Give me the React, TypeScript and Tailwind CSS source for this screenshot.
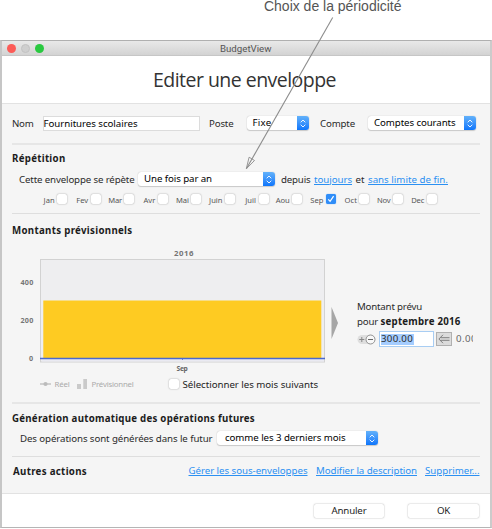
import { useLayoutEffect, useRef, useState } from "react";
import type { ReactNode } from "react";
import clsx from "clsx";

/* A line of text whose tracking is adjusted so that it spans `w` pixels. */
function Label({ w, className, children }: { w: number; className?: string; children: string }) {
  const ref = useRef<HTMLSpanElement>(null);
  const [spacing, setSpacing] = useState(0);
  useLayoutEffect(() => {
    if (!ref.current) return;
    const natural = ref.current.getBoundingClientRect().width;
    setSpacing((s) => s + (w - natural) / children.length);
  }, [w, children]);
  return (
    <span ref={ref} className={clsx("inline-block shrink-0 whitespace-nowrap", className)} style={{ letterSpacing: spacing }}>
      {children}
    </span>
  );
}

function Select({ className, children }: { className: string; children: ReactNode }) {
  return (
    <div className={clsx("flex h-[14px] shrink-0 items-center overflow-hidden rounded-[3px] bg-white text-black shadow-[0_0_1px_#aaa,0_1px_1px_#ccc]", className)}>
      {children}
      <span className="ml-auto flex h-full w-3 items-center justify-center bg-linear-to-b from-[#62b1fa] to-[#0a75fb]">
        <svg width="6" height="9" viewBox="0 0 6 9" fill="none" stroke="white" strokeWidth="0.9">
          <path d="M.7 3.3 3 1l2.3 2.3M.7 5.7 3 8l2.3-2.3" />
        </svg>
      </span>
    </div>
  );
}

function Box({ checked, className }: { checked?: boolean; className?: string }) {
  return (
    <span className={clsx("flex size-[10px] shrink-0 items-center justify-center rounded-[2px]", checked ? "bg-[#2f8df8] shadow-[0_0_1px_#2f8df8]" : "bg-white shadow-[0_0_1.5px_#888]", className)}>
      {checked && (
        <svg width="8" height="8" viewBox="0 0 8 8" fill="none" stroke="white" strokeWidth="1.2">
          <path d="m1.3 4.3 1.8 2L6.6 1.2" />
        </svg>
      )}
    </span>
  );
}

const months = [
  { name: "Jan", w: 11 },
  { name: "Fev", w: 12 },
  { name: "Mar", w: 13.5 },
  { name: "Avr", w: 12 },
  { name: "Mai", w: 13 },
  { name: "Juin", w: 13.5 },
  { name: "Juil", w: 11 },
  { name: "Aou", w: 14 },
  { name: "Sep", w: 13, checked: true },
  { name: "Oct", w: 12.5 },
  { name: "Nov", w: 13.5 },
  { name: "Dec", w: 13 },
];

const link = "text-[#2b90f2] underline decoration-1 underline-offset-1";
const heading = "font-bold text-[#1c1c1c]";

function Chart() {
  return (
    <svg width="320" height="132" viewBox="8 246 320 132" className="shrink-0 font-['Noto_Sans',sans-serif] font-bold">
      <rect x="40.5" y="259.5" width="284" height="102.5" fill="#eeeef0" stroke="#d2d2d2" />
      <rect x="42" y="359.5" width="282" height="2" fill="#eaeaf2" />
      <rect x="43.3" y="300.5" width="278" height="57.5" fill="#fecb22" />
      <path d="M40 358.5h285" stroke="#4a69cf" strokeWidth="1.4" />
      <path d="M182.5 358v1.8" stroke="#4a69cf" />
      <text x="174" y="256" fontSize="7.8" fill="#757575" textLength="19.5">2016</text>
      <g fontSize="7.2" fill="#777">
        <text x="20.5" y="284.7" textLength="12.8">400</text>
        <text x="20.5" y="323" textLength="12.8">200</text>
        <text x="29" y="361.3">0</text>
        <text x="176.5" y="371.3" fontSize="6.7" fill="#666" textLength="11.3">Sep</text>
      </g>
    </svg>
  );
}

export default function App() {
  return (
    <div className="relative h-[529px] w-[492px] overflow-hidden bg-white font-['Noto_Sans',sans-serif] text-[9.7px] leading-[14px] text-[#2a2a2a]">
      <div className="flex h-10 pl-[264px]">
        <Label w={137.5} className="h-[13px] font-['Liberation_Sans',sans-serif] text-[14px] leading-[13px] text-[#555]">Choix de la périodicité</Label>
      </div>

      <div className="flex h-[488px] w-[492px] flex-col border-t border-r-2 border-b border-l-2 border-t-[#b0b0b0] border-r-[#cbcbcb] border-b-[#b5b5b5] border-l-[#c6c6c6] bg-[#f5f5f5]">
        <header className="flex h-[15px] shrink-0 items-center border-b border-[#c6c6c6] bg-linear-to-b from-[#e9e9e9] to-[#d3d3d3] pl-[5px]">
          <span className="size-[9px] rounded-full bg-[#fc5b57]" />
          <span className="ml-[5px] size-[9px] rounded-full border border-[#c2c2c2] bg-[#cfcfcf]" />
          <span className="ml-[5px] size-[9px] rounded-full bg-[#29c940]" />
          <Label w={51.5} className="ml-[176px] mt-px font-['Roboto',sans-serif] text-[9.7px] text-[#555]">BudgetView</Label>
        </header>
        <div className="flex h-12 shrink-0 items-center border-b border-[#e2e2e2] bg-white pl-[151px]">
          <Label w={183} className="mt-px font-['Open_Sans',sans-serif] text-[19.5px] leading-6 text-[#333]">Editer une enveloppe</Label>
        </div>

        <section className="ml-[10px] flex h-[41px] w-[468px] shrink-0 items-center border-b-2 border-[#e6e6e6]">
          <Label w={21.5}>Nom</Label>
          <div className="ml-[9px] flex h-[15px] w-[157px] items-center border border-[#dcdcdc] bg-white text-black">
            <Label w={94}>Fournitures scolaires</Label>
          </div>
          <Label w={24.5} className="ml-[9.5px]">Poste</Label>
          <Select className="-mt-px ml-[13px] w-[62px] pl-[6px]"><Label w={19}>Fixe</Label></Select>
          <Label w={35} className="ml-[11.5px]">Compte</Label>
          <Select className="-mt-px ml-[13px] w-[108px] pl-[6px]"><Label w={81.5}>Comptes courants</Label></Select>
        </section>

        <section className="ml-[10px] flex h-[69px] w-[468px] shrink-0 flex-col border-b border-[#dedede] pt-[7px]">
          <Label w={53.5} className={clsx(heading, "self-start")}>Répétition</Label>
          <div className="mt-[6px] flex h-[14px] items-center pl-[7px]">
            <Label w={115.5} className="mt-px">Cette enveloppe se répète</Label>
            <Select className="ml-[3.5px] w-[137px] pl-[6px]"><Label w={68}>Une fois par an</Label></Select>
            <Label w={29.5} className="ml-[6px] mt-[2px]">depuis</Label>
            <Label w={38} className={clsx(link, "ml-[3.5px] mt-px")}>toujours</Label>
            <Label w={9} className="ml-[3.5px] mt-px">et</Label>
            <Label w={80} className={clsx(link, "ml-[3.5px] mt-px")}>sans limite de fin.</Label>
          </div>
          <div className="mt-[6px] flex h-[14px] pl-[21.5px] text-[7.6px] text-[#555]">
            {months.map((m) => (
              <div key={m.name} className="flex w-[33.6px] shrink-0 items-center justify-end gap-[2.5px]">
                <Label w={m.w} className="mt-px">{m.name}</Label>
                <Box checked={m.checked} />
              </div>
            ))}
          </div>
        </section>

        <section className="ml-[10px] flex h-[190px] w-[468px] shrink-0 flex-col border-b-2 border-[#e6e6e6] pt-[10px]">
          <Label w={120.5} className={clsx(heading, "self-start")}>Montants prévisionnels</Label>
          <div className="-ml-1 mt-[8px] flex h-[132px] shrink-0">
            <Chart />
            <svg width="7" height="32" viewBox="0 0 7 32" className="ml-[3px] mt-[61px] shrink-0"><path d="M.5 0 7 16 .5 32Z" fill="#a6a6a6" /></svg>
            <div className="ml-[19px] mt-[54px] flex w-[116px] flex-col overflow-hidden">
              <Label w={65} className="self-start">Montant prévu</Label>
              <div className="mt-px flex"><Label w={21}>pour</Label><Label w={80} className="ml-[2.5px] font-bold text-[#1c1c1c]">septembre 2016</Label></div>
              <div className="mt-[2px] flex h-[16px] items-center">
                <svg width="19" height="11" viewBox="0 0 19 11" fill="none" className="shrink-0">
                  <path d="M5 1h9v9H5A4.5 4.5 0 0 1 5 1Z" fill="#dedede" />
                  <path d="M2.3 5.5h5M4.8 3v5" stroke="#888" />
                  <circle cx="13.5" cy="5.5" r="4.5" fill="#f8f8f8" stroke="#777" strokeWidth=".8" />
                  <path d="M11 5.5h5" stroke="#666" />
                </svg>
                <div className="ml-[4px] flex h-[14px] w-[53px] shrink-0 items-center bg-white pl-px shadow-[0_0_0_1px_#a8cdf3]">
                  <span className="flex h-[11px] w-[33px] items-center bg-[#a5cdff]"><Label w={32}>300.00</Label></span>
                </div>
                <span className="ml-[3px] flex h-[14px] w-4 shrink-0 items-center justify-center border border-[#b0b0b0] bg-[#dcdcdc]">
                  <svg width="12" height="10" viewBox="0 0 12 10" fill="none" stroke="#757575" strokeWidth=".9"><path d="M5 .8.9 5 5 9.2M2.5 3.7h9M2.5 6.3h9" /></svg>
                </span>
                <Label w={21} className="ml-[4px] text-[#666]">0.00</Label>
              </div>
            </div>
          </div>
          <div className="-mt-px flex h-[14px] items-center pl-[28px] text-[7.8px] text-[#aaa]">
            <svg width="11" height="6" viewBox="0 0 11 6" className="shrink-0"><path d="M0 3h11" stroke="#bbb" strokeWidth="1.3" /><circle cx="5.5" cy="3" r="2.1" fill="#bbb" /></svg>
            <Label w={15} className="ml-[3.5px]">Réel</Label>
            <svg width="10" height="10" viewBox="0 0 10 10" className="ml-[7.5px] shrink-0"><path d="M0 5h4v5H0zM6.3 0H10v10H6.3z" fill="#cacaca" /></svg>
            <Label w={42} className="ml-[4.5px]">Prévisionnel</Label>
            <Box className="ml-[35px]" />
            <Label w={135.5} className="ml-[4px] mt-px text-[9.7px] text-[#222]">Sélectionner les mois suivants</Label>
          </div>
        </section>

        <section className="ml-[10px] flex h-[53px] w-[468px] shrink-0 flex-col border-b border-[#dedede] pt-[8px]">
          <Label w={243} className={clsx(heading, "self-start")}>Génération automatique des opérations futures</Label>
          <div className="mt-[5px] flex h-[14px] items-center pl-[8px]">
            <Label w={192.5} className="mt-px">Des opérations sont générées dans le futur</Label>
            <Select className="ml-[4px] w-[161.5px] pl-[8.5px]"><Label w={120.5}>comme les 3 derniers mois</Label></Select>
          </div>
        </section>

        <section className="ml-[10px] flex h-[36px] w-[468px] shrink-0 items-center pb-[8px]">
          <Label w={74} className={clsx(heading, "mt-px ml-px")}>Autres actions</Label>
          <Label w={119} className={clsx(link, "-mt-px ml-[101.5px]")}>Gérer les sous-enveloppes</Label>
          <Label w={101} className={clsx(link, "-mt-px ml-[8.5px]")}>Modifier la description</Label>
          <Label w={54.5} className={clsx(link, "-mt-px ml-[8px]")}>Supprimer...</Label>
        </section>

        <footer className="flex min-h-0 flex-1 items-center justify-end gap-6 border-t border-[#e2e2e2] bg-white pr-[11px] text-[#1c1c1c]">
          <button className="flex h-[14px] w-[70px] items-center justify-center rounded-[2px] shadow-[0_0_1.5px_#999]"><Label w={35}>Annuler</Label></button>
          <button className="flex h-[14px] w-[71px] items-center justify-center rounded-[2px] shadow-[0_0_1.5px_#999]"><Label w={13}>OK</Label></button>
        </footer>
      </div>

      {/* Callout arrow laid over the window */}
      <svg width="492" height="529" viewBox="0 0 492 529" fill="none" stroke="#8c8c8c" className="pointer-events-none absolute inset-0">
        <path d="M332.7 17.5 246.5 168.5" strokeWidth="1.1" />
        <path d="m246.3 168.8 2.8-11.6 5.4 3.3Z" strokeWidth=".9" />
      </svg>
    </div>
  );
}
